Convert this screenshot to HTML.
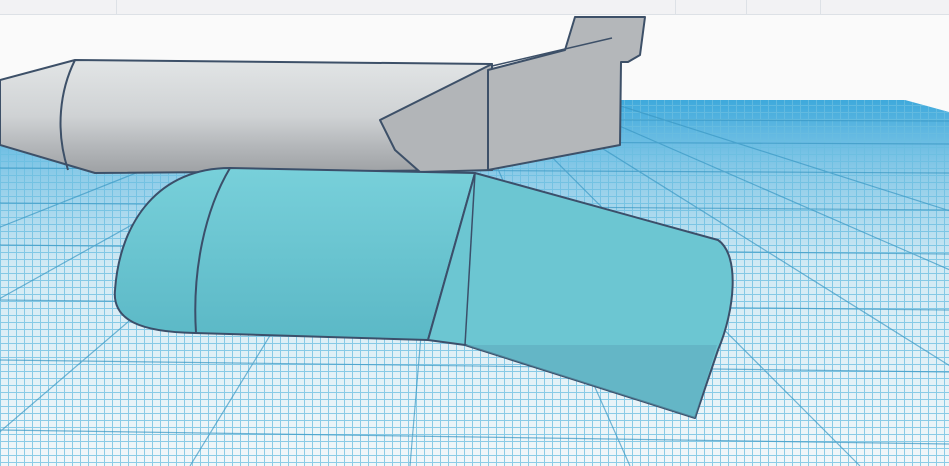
<!DOCTYPE html>
<html><head><style>
html,body{margin:0;padding:0;width:949px;height:466px;overflow:hidden;background:#fafafa;font-family:"Liberation Sans",sans-serif}
.bar{position:absolute;left:0;top:0;width:949px;height:14px;background:#f2f2f4;border-bottom:1px solid #dde1e6}
.sep{position:absolute;top:0;width:1px;height:14px;background:#dde1e6}
svg{position:absolute;left:0;top:0}
</style></head><body>
<svg width="949" height="466" viewBox="0 0 949 466">
<defs>
<linearGradient id="gr" x1="0" y1="0" x2="0" y2="1">
<stop offset="0" stop-color="#3ea9dc"/><stop offset="0.2" stop-color="#8ccbe8"/><stop offset="0.45" stop-color="#d2eaf4"/><stop offset="1" stop-color="#f2f7f9"/></linearGradient>
<linearGradient id="sh" x1="0" y1="0" x2="0" y2="1">
<stop offset="0" stop-color="#e2e5e6"/><stop offset="0.5" stop-color="#cfd2d4"/><stop offset="0.75" stop-color="#b5b8bb"/><stop offset="1" stop-color="#9ea1a4"/></linearGradient>
<linearGradient id="cy" x1="0" y1="0" x2="0" y2="1">
<stop offset="0" stop-color="#78d0da"/><stop offset="1" stop-color="#5bb8c6"/></linearGradient>
<pattern id="fine" width="8" height="7" patternUnits="userSpaceOnUse">
<path d="M0 0.5H8M0.5 0V7" stroke="#69bde0" stroke-width="1" fill="none" opacity="0.75"/></pattern>
<clipPath id="gc"><polygon points="0,100 905,100 949,112 949,466 0,466"/></clipPath>
</defs>
<polygon points="0,100 905,100 949,112 949,466 0,466" fill="url(#gr)"/>
<polygon points="0,100 905,100 949,112 949,466 0,466" fill="url(#fine)"/>
<g stroke="#3a98c4" stroke-width="1.2" opacity="0.7" clip-path="url(#gc)">
<line x1="0" y1="118" x2="949" y2="121"/><line x1="0" y1="140" x2="949" y2="144"/>
<line x1="0" y1="168" x2="949" y2="173"/><line x1="0" y1="203" x2="949" y2="210"/>
<line x1="0" y1="245" x2="949" y2="254"/><line x1="0" y1="300" x2="949" y2="310"/>
<line x1="0" y1="360" x2="949" y2="372"/><line x1="0" y1="430" x2="949" y2="444"/>
<line x1="445" y1="50" x2="-600" y2="466"/><line x1="445" y1="50" x2="-300" y2="466"/>
<line x1="445" y1="50" x2="-40" y2="466"/><line x1="445" y1="50" x2="190" y2="466"/>
<line x1="445" y1="50" x2="410" y2="466"/><line x1="445" y1="50" x2="630" y2="466"/>
<line x1="445" y1="50" x2="860" y2="466"/><line x1="445" y1="50" x2="1110" y2="466"/>
<line x1="445" y1="50" x2="1400" y2="466"/><line x1="445" y1="50" x2="1750" y2="466"/>
</g>
<!-- shuttle -->
<g stroke="#3d5068" stroke-width="2" stroke-linejoin="round">
<path d="M0,80 L75,60 L492,64 L492,170 L95,173 L0,145 Z" fill="url(#sh)"/>
<path d="M75,60 C60,90 55,130 68,170" fill="none"/>
<path d="M492,64 L380,120 L395,150 L420,172 L492,170 Z" fill="#b2b5b8"/>
<path d="M488,70 L565,50 L575,17 L645,17 L640,55 L628,62 L621,62 L620,145 L488,170 Z" fill="#b4b7ba"/>
<path d="M492,66 L612,38" fill="none" stroke-width="1.5"/>
</g>
<!-- cyan object -->
<g stroke="#3b4f6a" stroke-width="2" stroke-linejoin="round">
<path d="M230,168 C160,168 120,220 115,290 C112,320 140,332 195,333 L428,340 L475,173 Z" fill="url(#cy)"/>
<path d="M475,173 L718,240 C740,255 735,310 718,350 L695,418 L465,345 L428,340 Z" fill="#6cc6d2"/>
<path d="M465,345 L717,345 L695,418 Z" fill="#5fa9bb" fill-opacity="0.55" stroke="none"/>
<path d="M230,168 C205,210 192,270 196,333" fill="none"/>
<path d="M475,173 L465,345" fill="none" stroke-width="1.5"/>
</g>
</svg>
<div class="bar"></div>
<div class="sep" style="left:116px"></div><div class="sep" style="left:675px"></div><div class="sep" style="left:746px"></div><div class="sep" style="left:820px"></div>
</body></html>
